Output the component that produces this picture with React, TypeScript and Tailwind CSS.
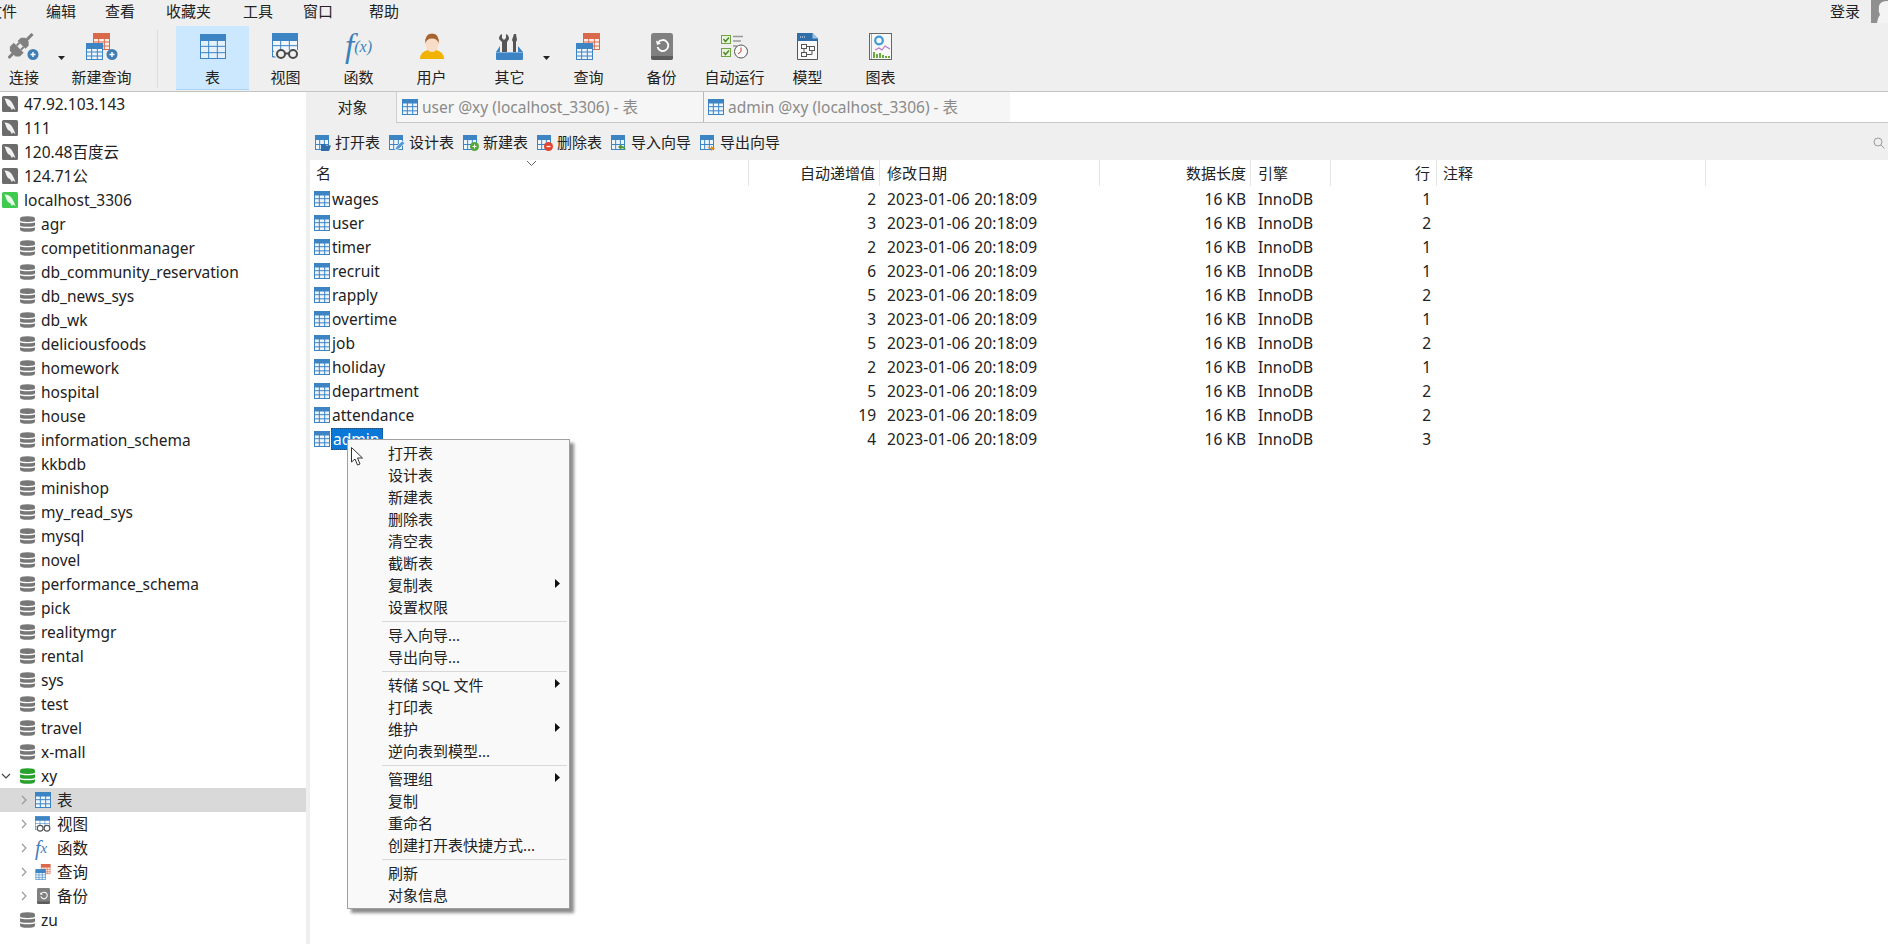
import type { ReactNode } from 'react';

const menus = [
  { label: '编辑', w: 'w-[59px]' },
  { label: '查看', w: 'w-[61px]' },
  { label: '收藏夹', w: 'w-[77px]' },
  { label: '工具', w: 'w-[60px]' },
  { label: '窗口', w: 'w-[66px]' },
  { label: '帮助', w: 'w-[60px]' },
];

const connections = ['47.92.103.143', '111', '120.48百度云', '124.71公'];

const databases = [
  'agr',
  'competitionmanager',
  'db_community_reservation',
  'db_news_sys',
  'db_wk',
  'deliciousfoods',
  'homework',
  'hospital',
  'house',
  'information_schema',
  'kkbdb',
  'minishop',
  'my_read_sys',
  'mysql',
  'novel',
  'performance_schema',
  'pick',
  'realitymgr',
  'rental',
  'sys',
  'test',
  'travel',
  'x-mall',
];

const tables = [
  { name: 'wages', inc: 2, rows: 1 },
  { name: 'user', inc: 3, rows: 2 },
  { name: 'timer', inc: 2, rows: 1 },
  { name: 'recruit', inc: 6, rows: 1 },
  { name: 'rapply', inc: 5, rows: 2 },
  { name: 'overtime', inc: 3, rows: 1 },
  { name: 'job', inc: 5, rows: 2 },
  { name: 'holiday', inc: 2, rows: 1 },
  { name: 'department', inc: 5, rows: 2 },
  { name: 'attendance', inc: 19, rows: 2 },
  { name: 'admin', inc: 4, rows: 3 },
];

const menuGroups = [
  [
    { label: '打开表' },
    { label: '设计表' },
    { label: '新建表' },
    { label: '删除表' },
    { label: '清空表' },
    { label: '截断表' },
    { label: '复制表', sub: true },
    { label: '设置权限' },
  ],
  [{ label: '导入向导...' }, { label: '导出向导...' }],
  [
    { label: '转储 SQL 文件', sub: true },
    { label: '打印表' },
    { label: '维护', sub: true },
    { label: '逆向表到模型...' },
  ],
  [
    { label: '管理组', sub: true },
    { label: '复制' },
    { label: '重命名' },
    { label: '创建打开表快捷方式...' },
  ],
  [{ label: '刷新' }, { label: '对象信息' }],
];

const BLUE = '#3d84c4';
const RED = '#d9694a';

// table glyph placed inside a parent svg
function Grid({
  x = 0,
  y = 0,
  w,
  h,
  head,
  color = BLUE,
  fill = '#eef5fb',
  cols = 3,
  rows = 3,
}: {
  x?: number;
  y?: number;
  w: number;
  h: number;
  head: number;
  color?: string;
  fill?: string;
  cols?: number;
  rows?: number;
}) {
  const vs = Array.from({ length: cols - 1 }, (_, i) => x + ((i + 1) * w) / cols);
  const hs = Array.from({ length: rows - 1 }, (_, i) => y + head + ((i + 1) * (h - head)) / rows);
  return (
    <g>
      <rect x={x + 0.5} y={y + 0.5} width={w - 1} height={h - 1} fill={fill} stroke={color} />
      <path d={`M${x} ${y + 1}q0-1 1-1h${w - 2}q1 0 1 1v${head}h-${w}z`} fill={color} />
      {vs.map((v) => (
        <line key={v} x1={v} x2={v} y1={y + head} y2={y + h} stroke={color} strokeWidth="1" />
      ))}
      {hs.map((v) => (
        <line key={v} x1={x} x2={x + w} y1={v} y2={v} stroke={color} strokeWidth="1" />
      ))}
    </g>
  );
}

function TableIcon({ className = 'h-4 w-4' }: { className?: string }) {
  return (
    <svg viewBox="0 0 16 16" className={`shrink-0 ${className}`}>
      <Grid w={16} h={16} head={3.5} />
    </svg>
  );
}

function PlusBadge({ cx, cy }: { cx: number; cy: number }) {
  return (
    <g>
      <circle cx={cx} cy={cy} r="5.5" fill="#3f7fb5" />
      <path d={`M${cx - 2.5} ${cy}h5M${cx} ${cy - 2.5}v5`} stroke="#fff" strokeWidth="1.4" />
    </g>
  );
}

function PlugIcon() {
  return (
    <svg width="32" height="27" viewBox="0 0 32 27">
      <g transform="translate(12.500 13) rotate(-45)" fill="#808080">
        <rect x="-17" y="-1.500" width="7" height="3" />
        <path d="M-11-4l3-3h5.500V7H-8l-3-3z" />
        <rect x="-2.500" y="-4" width="4" height="2" />
        <rect x="-2.500" y="2" width="4" height="2" />
        <path d="M1.500-5.500H6l3 3v5l-3 3H1.500z" />
        <rect x="8" y="-1.500" width="9" height="3" />
      </g>
      <PlusBadge cx={25} cy={21.500} />
    </svg>
  );
}

function NewQueryIcon() {
  return (
    <svg width="32" height="27" viewBox="0 0 32 27">
      <Grid x={7} w={17} h={17} head={5} color={RED} fill="#fbeee9" />
      <Grid y={10} w={17} h={17} head={5} />
      <PlusBadge cx={26} cy={21.500} />
    </svg>
  );
}

function QueryIcon() {
  return (
    <svg width="25" height="27" viewBox="0 0 25 27">
      <Grid x={7} w={17} h={17} head={5} color={RED} fill="#fbeee9" />
      <Grid y={10} w={17} h={17} head={5} />
    </svg>
  );
}

function ViewIcon() {
  return (
    <svg width="28" height="27" viewBox="0 0 28 27">
      <Grid w={26} h={24} head={7} fill="#f3f7fb" />
      <rect x="2" y="17" width="25" height="10" fill="#efefef" />
      <path d="M.5 17v7h3" fill="none" stroke={BLUE} />
      <circle cx="9" cy="21" r="4" fill="#efefef" stroke="#4a4a4a" strokeWidth="2" />
      <circle cx="21" cy="21" r="4" fill="#efefef" stroke="#4a4a4a" strokeWidth="2" />
      <path d="M13 20.500h4" stroke="#4a4a4a" strokeWidth="2" />
    </svg>
  );
}

function UserIcon() {
  return (
    <svg width="26" height="27" viewBox="0 0 26 27">
      <path d="M1 26q0-7 8-9h8q8 2 8 9z" fill="#f0b400" />
      <ellipse cx="13" cy="11" rx="6.500" ry="8" fill="#f8dcc8" />
      <path d="M6.500 11Q5 1 13 0.500 21 1 19.500 11 19 5.500 13 5.500T6.500 11z" fill="#a8642e" />
    </svg>
  );
}

function ToolsIcon() {
  return (
    <svg width="27" height="27" viewBox="0 0 27 27">
      <path d="M6 1v4l2 2 2-2V1q3 1 3 5l-2 3v10H6V9L3 6q0-4 3-5z" fill="#555" />
      <path d="M18 1h2l1 6-1 2v10h-3V9l-1-2z" fill="#555" />
      <path d="M0 19l4-6v6h18v-6l5 6v7q0 1-1 1H1q-1 0-1-1z" fill={BLUE} />
      <rect x="0" y="19" width="27" height="1" fill="#7fb0dc" />
    </svg>
  );
}

function BackupIcon({ size = 22, height = 27 }: { size?: number; height?: number }) {
  return (
    <svg width={size} height={height} viewBox="0 0 22 27">
      <rect width="22" height="27" rx="2.500" fill="#808080" />
      <path d="M0 23h22v1.500q0 2.500-2.500 2.500h-17Q0 27 0 24.500z" fill="#5c5c5c" />
      <path
        d="M7.200 9.500a5.500 5.500 0 1 1-.7 4.500"
        fill="none"
        stroke="#fff"
        strokeWidth="1.800"
      />
      <path d="M5 7.500l1 4.500 4-1.500z" fill="#fff" />
    </svg>
  );
}

function AutoRunIcon() {
  return (
    <svg width="28" height="27" viewBox="0 0 28 27">
      <g fill="#eaf4dc" stroke="#6da544">
        <rect x=".5" y="2.500" width="9" height="8" />
        <rect x=".5" y="15.500" width="9" height="8" />
      </g>
      <path d="M2.500 6l2 2.500 3.500-4M2.500 19l2 2.500 3.500-4" fill="none" stroke="#4e8a2a" strokeWidth="1.500" />
      <path d="M12 3.500h10M12 8h8M12 13h4" stroke="#999" strokeWidth="1.600" />
      <circle cx="20" cy="18.500" r="6.500" fill="#fafafa" stroke="#555" />
      <path d="M20 14.500v4l-3 2.500" fill="none" stroke="#c0392b" />
    </svg>
  );
}

function ModelIcon() {
  return (
    <svg width="21" height="27" viewBox="0 0 21 27">
      <path d="M.5.500h15l5 5v21H.5z" fill="#fafafa" stroke="#555" />
      <path d="M0 0h15.500L21 5.500V8H0z" fill="#2f6ea8" />
      <path d="M3 4h1M5 4h1M7 4h1" stroke="#fff" />
      <path d="M15.500 0L21 5.500h-5.500z" fill="#9cc4e6" />
      <g fill="none" stroke="#555">
        <rect x="4.500" y="11.500" width="5" height="4" />
        <rect x="12.500" y="13.500" width="5" height="4" />
        <rect x="4.500" y="19.500" width="5" height="4" />
        <path d="M9.500 13.500h3M7 15.500v4M15 17.500v4H9.500" />
      </g>
    </svg>
  );
}

function ChartIcon() {
  return (
    <svg width="23" height="27" viewBox="0 0 23 27">
      <rect x=".5" y=".5" width="22" height="26" fill="#f8f8f8" stroke="#666" />
      <path d="M2.500 1v25" stroke="#aaa" />
      <circle cx="10" cy="7.500" r="3.800" fill="none" stroke="#3e9ad6" strokeWidth="2.200" />
      <path d="M6 17l4-2 3 2 3-4 5 3" fill="none" stroke="#b678cf" strokeWidth="1.200" />
      <path d="M5 25v-6M8 25v-4M11 25v-5M14 25v-3M17 25v-2M20 25v-2" stroke="#5aa02c" strokeWidth="1.800" />
    </svg>
  );
}

function FxIcon() {
  return (
    <span className="flex h-[27px] items-center font-['Liberation_Serif',serif] italic text-[#3d7fb9]">
      <span className="text-[33px] leading-none">f</span>
      <span className="text-[16px] leading-none">(x)</span>
    </span>
  );
}

function ServerIcon({ green = false }: { green?: boolean }) {
  return (
    <svg viewBox="0 0 16 16" className="h-4 w-4 shrink-0">
      <rect width="16" height="16" rx="1.500" fill={green ? '#3fcb4f' : '#6c6c6c'} />
      <path
        d="M2.500 2.500q5 0 7.500 4t3.500 7.500l-2.500-1.500-1 1.500-2-3q-2.500-.5-3.500-3.500t-2-5z"
        fill={green ? '#eafbea' : '#f1f1f1'}
      />
    </svg>
  );
}

function DbIcon({ green = false }: { green?: boolean }) {
  const c = green ? '#27a02c' : '#777777';
  return (
    <svg viewBox="0 0 15 16" className="h-4 w-[15px] shrink-0">
      <path d="M0 2.500Q0 .2 7.500 .2T15 2.500v1.800Q15 6 7.500 6T0 4.300z" fill={c} />
      <path d="M0 6.300Q2 7.300 7.500 7.300T15 6.300v3Q15 10.800 7.500 10.800T0 9.300z" fill={c} />
      <path d="M0 11.200Q2 12.200 7.500 12.200T15 11.200v2.300Q15 15.800 7.500 15.800T0 13.500z" fill={c} />
    </svg>
  );
}

function Chevron({ open = false, dark = false }: { open?: boolean; dark?: boolean }) {
  return (
    <svg viewBox="0 0 10 10" className="h-[10px] w-[10px] shrink-0">
      <path
        d={open ? 'M1 3l4 4 4-4' : 'M3 1l4 4-4 4'}
        fill="none"
        stroke={dark ? '#444' : '#999'}
        strokeWidth="1.200"
      />
    </svg>
  );
}

function Caret() {
  return (
    <svg viewBox="0 0 7 4" className="h-1 w-[7px]">
      <path d="M0 0h7L3.500 4z" fill="#222" />
    </svg>
  );
}

function ToolButton({
  label,
  icon,
  active = false,
  width = 'w-[73px]',
}: {
  label: string;
  icon: ReactNode;
  active?: boolean;
  width?: string;
}) {
  return (
    <div
      className={`flex h-[64px] shrink-0 flex-col items-center pt-[7px] ${width} ${
        active ? 'border-b border-[#a9d3f5] bg-[#cce8ff]' : ''
      }`}
    >
      <div className="flex h-[27px] items-center justify-center">{icon}</div>
      <div className="mt-[7px] whitespace-nowrap text-[15px] leading-5">{label}</div>
    </div>
  );
}

function SmallAction({
  label,
  badge,
  textWidth,
}: {
  label: string;
  badge: ReactNode;
  textWidth: string;
}) {
  return (
    <div className="flex items-center gap-[4px]">
      <svg viewBox="0 0 16 16" className="h-4 w-4 shrink-0">
        <Grid w={14} h={15} head={4} rows={2} fill="#eef5fb" />
        {badge}
      </svg>
      <span className={`whitespace-nowrap text-[15px] ${textWidth}`}>{label}</span>
    </div>
  );
}

function SidebarRow({
  icon,
  label,
  pad,
  selected = false,
  gap = 'gap-[7px]',
}: {
  icon: ReactNode;
  label: string;
  pad: string;
  selected?: boolean;
  gap?: string;
}) {
  return (
    <div className={`flex h-6 items-center text-[15.5px] ${gap} ${pad} ${selected ? 'bg-[#d9d9d9]' : ''}`}>
      {icon}
      <span className="whitespace-nowrap pt-[2px]">{label}</span>
    </div>
  );
}

const columns =
  'grid grid-cols-[439px_131px_220px_151px_80px_106px_269px_1fr]';

export default function App() {
  return (
    <div className="relative flex h-[944px] w-[1888px] flex-col overflow-hidden bg-white font-['Noto_Sans','Noto_Sans_CJK_SC',sans-serif] text-[15px] text-[#222]">
      {/* menu bar */}
      <div className="flex h-6 shrink-0 items-center bg-[#efefef] pb-[2px]">
        <span className="-ml-[13px] w-[59px] whitespace-nowrap">文件</span>
        {menus.map((m) => (
          <span key={m.label} className={`whitespace-nowrap ${m.w}`}>
            {m.label}
          </span>
        ))}
        <span className="ml-auto mr-[11px]">登录</span>
        <div className="flex h-6 w-[17px] items-start overflow-hidden bg-[#8f8f8f]">
          <svg viewBox="0 0 17 24" className="h-6 w-[17px]">
            <path d="M6 24q1-6 3-8-2-4-1-9t9-5v22z" fill="#f4f4f4" />
          </svg>
        </div>
      </div>

      {/* main toolbar */}
      <div className="flex h-[68px] shrink-0 items-start border-b border-[#c4c4c4] bg-[#efefef] pt-[2px]">
        <ToolButton label="连接" icon={<PlugIcon />} width="w-[48px]" />
        <div className="flex h-[64px] w-[17px] shrink-0 items-start pl-[10px] pt-[30px]">
          <Caret />
        </div>
        <ToolButton label="新建查询" icon={<NewQueryIcon />} />
        <div className="ml-[19px] mr-[18px] mt-[4px] h-[58px] w-px bg-[#dcdcdc]" />
        <ToolButton
          label="表"
          active
          icon={
            <svg width="26" height="25" viewBox="0 0 26 25">
              <Grid w={26} h={25} head={6} fill="#e4f1fb" />
            </svg>
          }
        />
        <ToolButton label="视图" icon={<ViewIcon />} />
        <ToolButton label="函数" icon={<FxIcon />} />
        <ToolButton label="用户" icon={<UserIcon />} />
        <div className="ml-[5px]">
          <ToolButton label="其它" icon={<ToolsIcon />} />
        </div>
        <div className="-ml-[3px] mr-[2px] flex h-[64px] w-[7px] items-start pt-[30px]">
          <Caret />
        </div>
        <ToolButton label="查询" icon={<QueryIcon />} />
        <ToolButton label="备份" icon={<BackupIcon />} />
        <ToolButton label="自动运行" icon={<AutoRunIcon />} />
        <ToolButton label="模型" icon={<ModelIcon />} />
        <ToolButton label="图表" icon={<ChartIcon />} />
      </div>

      <div className="flex min-h-0 flex-1">
        {/* connection tree */}
        <div className="w-[306px] shrink-0 bg-white">
          {connections.map((c) => (
            <SidebarRow key={c} icon={<ServerIcon />} label={c} pad="pl-[2px]" gap="gap-[6px]" />
          ))}
          <SidebarRow icon={<ServerIcon green />} label="localhost_3306" pad="pl-[2px]" gap="gap-[6px]" />
          {databases.map((d) => (
            <SidebarRow key={d} icon={<DbIcon />} label={d} pad="pl-[20px]" gap="gap-[6px]" />
          ))}
          <div className="flex h-6 items-center pl-[1px] text-[15.5px]">
            <Chevron open dark />
            <span className="ml-[9px]">
              <DbIcon green />
            </span>
            <span className="ml-[6px] pt-[2px]">xy</span>
          </div>
          <SidebarRow
            selected
            pad="pl-[19px]"
            label="表"
            gap="gap-[6px]"
            icon={
              <>
                <Chevron />
                <TableIcon />
              </>
            }
          />
          <SidebarRow
            pad="pl-[19px]"
            label="视图"
            gap="gap-[6px]"
            icon={
              <>
                <Chevron />
                <svg viewBox="0 0 28 27" className="h-4 w-4 shrink-0">
                  <Grid w={26} h={24} head={7} fill="#fff" />
                  <circle cx="9" cy="21" r="5" fill="#fff" stroke="#555" strokeWidth="2" />
                  <circle cx="21" cy="21" r="5" fill="#fff" stroke="#555" strokeWidth="2" />
                </svg>
              </>
            }
          />
          <SidebarRow
            pad="pl-[19px]"
            label="函数"
            gap="gap-[6px]"
            icon={
              <>
                <Chevron />
                <span className="flex h-4 w-4 shrink-0 items-center font-['Liberation_Serif',serif] italic text-[#3d7fb9]">
                  <span className="text-[20px] leading-none">f</span>
                  <span className="text-[15px] leading-none">x</span>
                </span>
              </>
            }
          />
          <SidebarRow
            pad="pl-[19px]"
            label="查询"
            gap="gap-[6px]"
            icon={
              <>
                <Chevron />
                <svg viewBox="0 0 25 27" className="h-4 w-4 shrink-0">
                  <Grid x={9} w={16} h={17} head={5} color={RED} fill="#fbeee9" />
                  <Grid y={9} w={17} h={18} head={5} />
                </svg>
              </>
            }
          />
          <SidebarRow
            pad="pl-[19px]"
            label="备份"
            gap="gap-[6px]"
            icon={
              <>
                <Chevron />
                <span className="flex w-4 shrink-0 justify-center">
                  <BackupIcon size={13} height={16} />
                </span>
              </>
            }
          />
          <SidebarRow icon={<DbIcon />} label="zu" pad="pl-[20px]" gap="gap-[6px]" />
        </div>

        {/* object pane */}
        <div className="flex min-w-0 flex-1 flex-col bg-[#efefef]">
          <div className="flex h-[31px] shrink-0">
            <div className="flex w-[90px] shrink-0 items-center justify-center pl-[3px]">对象</div>
            <div className="flex flex-1 border-b border-[#c8c8c8] bg-white text-[15.5px] text-[#8a8a8a]">
              <div className="flex w-[307px] items-center gap-[4px] border-l border-[#cfcfcf] bg-[#f6f6f6] pl-[5px]">
                <TableIcon />
                <span className="whitespace-nowrap pt-[1px]">user @xy (localhost_3306) - 表</span>
              </div>
              <div className="flex w-[307px] items-center gap-[4px] border-l border-[#b8b8b8] bg-[#f6f6f6] pl-[4px]">
                <TableIcon />
                <span className="whitespace-nowrap pt-[1px]">admin @xy (localhost_3306) - 表</span>
              </div>
            </div>
          </div>

          {/* object actions */}
          <div className="flex h-[37px] shrink-0 items-center pl-[9px] pr-[2px] pt-[2px]">
            <div className="flex items-center gap-[9px]">
              <SmallAction
                label="打开表"
                textWidth="w-[45px]"
                badge={<path d="M6 9h4l1 1.500h5L14 16H6z" fill="#2f6ea8" />}
              />
              <SmallAction
                label="设计表"
                textWidth="w-[45px]"
                badge={<path d="M6 15l1-3 6-6 3 2-6 6z" fill="#5b9bd5" stroke="#fff" strokeWidth=".6" />}
              />
              <SmallAction
                label="新建表"
                textWidth="w-[45px]"
                badge={
                  <g>
                    <circle cx="11.500" cy="11.500" r="4.500" fill="#55a83a" />
                    <path d="M9.500 11.500h4M11.500 9.500v4" stroke="#fff" />
                  </g>
                }
              />
              <SmallAction
                label="删除表"
                textWidth="w-[45px]"
                badge={
                  <g>
                    <circle cx="11.500" cy="11.500" r="4.500" fill="#e0452f" />
                    <path d="M9.500 11.500h4" stroke="#fff" strokeWidth="1.200" />
                  </g>
                }
              />
              <SmallAction
                label="导入向导"
                textWidth="w-[60px]"
                badge={<path d="M14.500 15q0-4-4-4V9L7 12l3.500 3v-2q2 0 4 2z" fill="#4e9a2e" />}
              />
              <SmallAction
                label="导出向导"
                textWidth="w-[60px]"
                badge={<path d="M7 9q0 4 4 4v-2l4 2.500-4 2.500v-2q-4 0-4-5z" fill="#e88a1a" />}
              />
            </div>
            <svg viewBox="0 0 12 12" className="ml-auto mr-[1px] h-3 w-3">
              <circle cx="5" cy="5" r="4" fill="none" stroke="#9a9a9a" />
              <path d="M8 8l3.500 3.500" stroke="#9a9a9a" />
            </svg>
          </div>

          {/* table list */}
          <div className="relative ml-1 flex-1 bg-white">
            <svg viewBox="0 0 9 5" className="absolute left-[217px] top-[1px] h-[5px] w-[9px]">
              <path d="M0 0l4.500 4.500L9 0" fill="none" stroke="#666" />
            </svg>
            <div className={`${columns} h-[26px] items-center`}>
              <div className="flex h-full items-center border-r border-[#e6e6e6] pl-[6px]">名</div>
              <div className="flex h-full items-center justify-end border-r border-[#e6e6e6] pr-[4px]">自动递增值</div>
              <div className="flex h-full items-center border-r border-[#e6e6e6] pl-[7px]">修改日期</div>
              <div className="flex h-full items-center justify-end border-r border-[#e6e6e6] pr-[4px]">数据长度</div>
              <div className="flex h-full items-center border-r border-[#e6e6e6] pl-[7px]">引擎</div>
              <div className="flex h-full items-center justify-end border-r border-[#e6e6e6] pr-[6px]">行</div>
              <div className="flex h-full items-center border-r border-[#e6e6e6] pl-[6px]">注释</div>
              <div />
            </div>
            {tables.map((t) => (
              <div key={t.name} className={`${columns} h-6 items-center text-[15.5px]`}>
                <div className="flex items-center pl-1">
                  <TableIcon />
                  {t.name === 'admin' ? (
                    <span className="ml-[1px] flex h-[22px] w-[52px] items-center border border-dotted border-[#1d4f80] bg-[#0a78d7] pl-[1px] pt-[2px] text-white">
                      admin
                    </span>
                  ) : (
                    <span className="ml-[2px] pt-[2px]">{t.name}</span>
                  )}
                </div>
                <div className="pr-[4px] pt-[2px] text-right">{t.inc}</div>
                <div className="pl-[7px] pt-[2px] tracking-[0.2px]">2023-01-06 20:18:09</div>
                <div className="pr-[5px] pt-[2px] text-right">16 KB</div>
                <div className="pl-[7px] pt-[2px]">InnoDB</div>
                <div className="pr-[6px] pt-[2px] text-right">{t.rows}</div>
                <div />
                <div />
              </div>
            ))}
          </div>
        </div>
      </div>

      {/* context menu */}
      <div className="absolute left-[347px] top-[439px] w-[223px] border border-[#a0a0a0] bg-[#f9f9f9] py-[2px] shadow-[4px_4px_3px_rgba(0,0,0,0.45)]">
        {menuGroups.map((group, i) => (
          <div key={i}>
            {i > 0 && (
              <div className="flex h-[6px] items-center pl-[34px] pr-[2px]">
                <div className="h-px w-full bg-[#d8d8d8]" />
              </div>
            )}
            {group.map((item) => (
              <div key={item.label} className="flex h-[22px] items-center pl-[40px] pr-[9px]">
                <span className="whitespace-nowrap">{item.label}</span>
                {item.sub && (
                  <svg viewBox="0 0 5 9" className="ml-auto mb-[3px] h-[9px] w-[5px]">
                    <path d="M0 0l5 4.500L0 9z" fill="#111" />
                  </svg>
                )}
              </div>
            ))}
          </div>
        ))}
      </div>

      {/* mouse pointer */}
      <svg viewBox="0 0 13 19" className="absolute left-[351px] top-[447px] h-[19px] w-[13px]">
        <path d="M.5.500v14.500l3.500-3 2.500 6 2.500-1-2.500-6h5z" fill="#fff" stroke="#333" />
      </svg>
    </div>
  );
}
